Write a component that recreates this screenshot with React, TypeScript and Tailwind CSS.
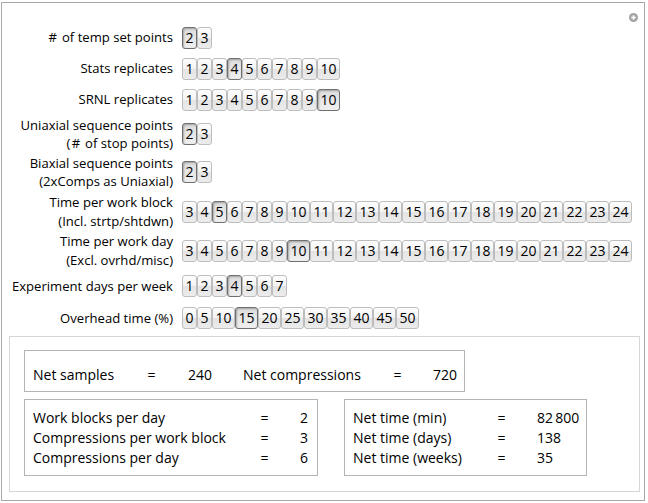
import clsx from "clsx";

const range = (a: number, b: number, step = 1) => {
    const out: number[] = [];
    for (let v = a; v <= b; v += step) out.push(v);
    return out;
};

interface ControlRow {
    label: string[];
    values: number[];
    selected: number;
    height: string;
}

const rows: ControlRow[] = [
    { label: ["# of temp set points"], values: [2, 3], selected: 2, height: "h-[31px]" },
    { label: ["Stats replicates"], values: range(1, 10), selected: 4, height: "h-[31px]" },
    { label: ["SRNL replicates"], values: range(1, 10), selected: 10, height: "h-[31px]" },
    { label: ["Uniaxial sequence points", "(# of stop points)"], values: [2, 3], selected: 2, height: "h-[38px]" },
    { label: ["Biaxial sequence points", "(2xComps as Uniaxial)"], values: [2, 3], selected: 2, height: "h-[38px]" },
    { label: ["Time per work block", "(Incl. strtp/shtdwn)"], values: range(3, 24), selected: 5, height: "h-[41px]" },
    { label: ["Time per work day", "(Excl. ovrhd/misc)"], values: range(3, 24), selected: 10, height: "h-[37px]" },
    { label: ["Experiment days per week"], values: range(1, 7), selected: 4, height: "h-[34px]" },
    { label: ["Overhead time (%)"], values: range(0, 50, 5), selected: 15, height: "h-[30px]" },
];

// the sharp sign in the labels is drawn wider than a plain '#'
function LabelText({ text }: { text: string }) {
    const parts = text.split("#");
    return (
        <>
            {parts.map((p, i) => (
                <span key={i}>
                    {i > 0 && <span className="px-[1.5px]">#</span>}
                    {p}
                </span>
            ))}
        </>
    );
}

function Setter({ values, selected }: { values: number[]; selected: number }) {
    return (
        <div className="flex">
            {values.map((v) => {
                const on = v === selected;
                return (
                    <div
                        key={v}
                        className={clsx(
                            "flex h-[22px] items-center justify-center rounded-[3px] border text-[14px] leading-none text-black",
                            v >= 10 ? "w-[23px]" : "w-[15px]",
                            on
                                ? "border-[#707070] bg-[linear-gradient(#dcdcdc,#e9e9e9_60%,#efefef)] shadow-[inset_1px_1px_2px_rgba(0,0,0,0.28)]"
                                : "border-[#bdbdbd] bg-[linear-gradient(#fdfdfd,#f3f3f3_50%,#e4e4e4_52%,#ececec)]"
                        )}
                    >
                        {v}
                    </div>
                );
            })}
        </div>
    );
}

function ResultLine({ label, value, labelW, valueW, gapW, align }: {
    label: string;
    value: string;
    labelW: string;
    valueW: string;
    gapW?: string;
    align: "left" | "right";
}) {
    return (
        <div className="flex h-[20px] items-center">
            <span className={labelW}>{label}</span>
            <span className="w-[9px] text-center">=</span>
            {gapW && <span className={gapW} />}
            <span className={clsx(valueW, align === "right" ? "text-right" : "text-left")}>{value}</span>
        </div>
    );
}

export default function App() {
    return (
        <div className="h-[503px] w-[648px] bg-white pl-[1px] pt-[2px] font-['Open_Sans',sans-serif] text-black">
            <div className="relative h-[499px] w-[644px] border border-[#a8a8a8]">
                {/* add/bookmark icon */}
                <div className="absolute right-[6px] top-[10px] flex h-[9px] w-[9px] items-center justify-center rounded-full bg-[#a3a3a3]">
                    <svg width="7" height="7" viewBox="0 0 7 7">
                        <path d="M3.5 1.2v4.6M1.2 3.5h4.6" stroke="#fff" strokeWidth="1.5" />
                    </svg>
                </div>

                {/* Controls */}
                <div className="flex flex-col pt-[19px]">
                    {rows.map((r) => (
                        <div key={r.label[0]} className={clsx("flex items-center", r.height)}>
                            <div className="w-[171px] text-right text-[13.1px] leading-[18.5px]">
                                {r.label.map((l) => (
                                    <div key={l}>
                                        <LabelText text={l} />
                                    </div>
                                ))}
                            </div>
                            <div className="ml-[9px]">
                                <Setter values={r.values} selected={r.selected} />
                            </div>
                        </div>
                    ))}
                </div>

                {/* Results */}
                <div className="ml-[7px] mt-[3px] h-[156px] w-[631px] border border-[#d6d6d6] pl-[14px] pt-[13px] text-[14px]">
                    <div className="flex h-[42px] w-[441px] border border-[#b4b4b4] pl-[8px] pt-[13px]">
                        <div className="flex h-[20px] items-center">
                            <span className="w-[114px]">Net samples</span>
                            <span className="w-[9px] text-center">=</span>
                            <span className="w-[56px] text-right">240</span>
                            <span className="w-[31px]" />
                            <span className="w-[150px]">Net compressions</span>
                            <span className="w-[9px] text-center">=</span>
                            <span className="w-[55px] text-right">720</span>
                        </div>
                    </div>
                    <div className="mt-[7px] flex gap-[26px]">
                        <div className="h-[77px] w-[294px] border border-[#b4b4b4] pl-[8px] pt-[7px]">
                            <ResultLine label="Work blocks per day" value="2" labelW="w-[227px]" valueW="w-[39px]" align="right" />
                            <ResultLine label="Compressions per work block" value="3" labelW="w-[227px]" valueW="w-[39px]" align="right" />
                            <ResultLine label="Compressions per day" value="6" labelW="w-[227px]" valueW="w-[39px]" align="right" />
                        </div>
                        <div className="h-[77px] w-[243px] border border-[#b4b4b4] pl-[8px] pt-[7px]">
                            <ResultLine label="Net time (min)" value={"82\u2009800"} labelW="w-[144px]" gapW="w-[31px]" valueW="w-[44px]" align="left" />
                            <ResultLine label="Net time (days)" value="138" labelW="w-[144px]" gapW="w-[31px]" valueW="w-[44px]" align="left" />
                            <ResultLine label="Net time (weeks)" value="35" labelW="w-[144px]" gapW="w-[31px]" valueW="w-[44px]" align="left" />
                        </div>
                    </div>
                </div>
            </div>
        </div>
    );
}
